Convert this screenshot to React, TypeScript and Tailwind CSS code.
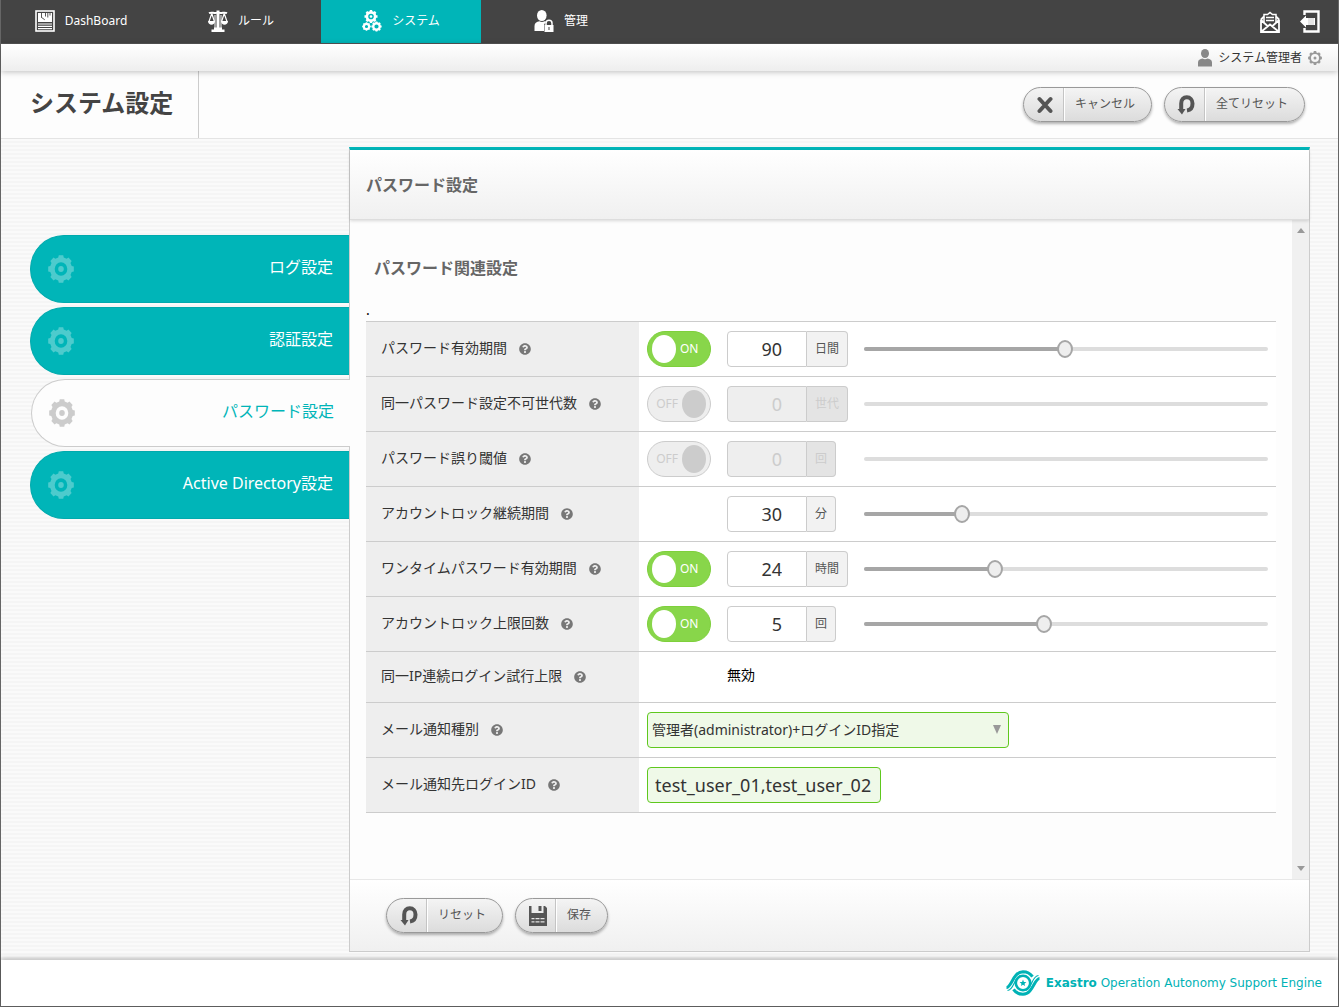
import { useState } from 'react'
import type { ReactNode } from 'react'
import { FaQuestionCircle } from 'react-icons/fa'

/** Outline of a cog with square teeth centred on (cx, cy). */
function cogPath(cx: number, cy: number, outer: number, root: number, teeth = 8) {
  const points: string[] = []
  const step = (Math.PI * 2) / teeth
  for (let i = 0; i < teeth; i++) {
    const a = i * step - Math.PI / 2
    const corners: [number, number][] = [
      [root, a - step * 0.32],
      [outer, a - step * 0.22],
      [outer, a + step * 0.22],
      [root, a + step * 0.32],
    ]
    corners.forEach(([r, t]) => points.push(`${(cx + r * Math.cos(t)).toFixed(2)} ${(cy + r * Math.sin(t)).toFixed(2)}`))
  }
  return `M${points.join('L')}Z`
}

function ring(cx: number, cy: number, r: number) {
  return `M${cx - r} ${cy}a${r} ${r} 0 1 0 ${r * 2} 0a${r} ${r} 0 1 0 ${-r * 2} 0Z`
}

function GearIcon({ className }: { className: string }) {
  return (
    <svg viewBox="0 0 28 28" preserveAspectRatio="none" className={className} fill="currentColor" fillRule="evenodd" aria-hidden="true">
      <path d={cogPath(14, 14, 14, 11.9) + ring(14, 14, 6.8)} />
      <circle cx="14" cy="14" r="3" />
    </svg>
  )
}

function ThinGearIcon() {
  return (
    <svg viewBox="0 0 28 28" className="h-3.5 w-3.5 text-[#999]" fill="currentColor" fillRule="evenodd" aria-hidden="true">
      <path d={cogPath(14, 14, 14, 11.6) + ring(14, 14, 8)} />
      <circle cx="14" cy="14" r="3" />
    </svg>
  )
}

function DashboardIcon() {
  return (
    <svg viewBox="0 0 20 22" className="h-[22px] w-5" aria-hidden="true">
      <rect x="1" y="1" width="18" height="20" fill="none" stroke="#fff" strokeWidth="1.6" />
      <rect x="3" y="3" width="14" height="9" fill="#fff" />
      <path d="M6.500 3v4.500M6.200 7.200l3.600 2.600M10.500 3v3.500M12.800 3v4.500M15 3v2.500" stroke="#444" strokeWidth="0.900" fill="none" />
      <path d="M3 14h14M3 16.300h14M3 18.600h14" stroke="#fff" strokeWidth="1.200" />
    </svg>
  )
}

function ScaleIcon() {
  return (
    <svg viewBox="0 0 20 22" className="h-[22px] w-5" fill="none" stroke="#fff" aria-hidden="true">
      <path d="M1 3.200c3-1.600 5 .8 9-.6 4 1.400 6-1 9 .6" strokeWidth="2" />
      <path d="M10 0.500v19" strokeWidth="3" />
      <path d="M7 5v13M13 5v13" strokeWidth="1" />
      <path d="M3.800 3.500 1 11.500M3.800 3.500l2.600 8M16.200 3.500l-2.600 8M16.200 3.500l2.800 8" strokeWidth="1.200" />
      <path d="M0 11h7c0 5-7 5-7 0ZM13 11h7c0 5-7 5-7 0Z" fill="#fff" stroke="none" />
      <path d="M3.500 19.500h13V22h-13ZM6 17.500h8v2H6Z" fill="#fff" stroke="none" />
    </svg>
  )
}

function GearsIcon() {
  return (
    <svg viewBox="0 0 20 22" className="h-[22px] w-5" fill="#fff" fillRule="evenodd" aria-hidden="true">
      <path d={cogPath(9, 6.5, 6.6, 5.4) + ring(9, 6.5, 2.8)} />
      <circle cx="9" cy="6.500" r="1.300" />
      <path d={cogPath(4.5, 16.5, 4.4, 3.7) + ring(4.5, 16.5, 1.6)} />
      <path d={cogPath(14.5, 16.5, 5.2, 4.4) + ring(14.5, 16.5, 2.1)} />
    </svg>
  )
}

function UserLockIcon() {
  return (
    <svg viewBox="0 0 20 22" className="h-[22px] w-5" fill="#fff" aria-hidden="true">
      <ellipse cx="7.800" cy="5.500" rx="4.800" ry="5.500" />
      <path d="M0.500 21v-5c0-3 2-4.200 5-4.700 1.500 1 3.500 1 5 0 1 .2 1.600.400 2 .8-1.600 1-2.300 2-2.500 3.600v5.300Z" />
      <path d="M12 15.500v-2.200a3 3 0 0 1 6 0v2.200" fill="none" stroke="#fff" strokeWidth="1.500" />
      <path fillRule="evenodd" d="M10.500 15h9v7h-9ZM14.500 17v3h1v-3Z" />
    </svg>
  )
}

function MailIcon() {
  return (
    <svg viewBox="0 0 20 22" className="h-[22px] w-5" fill="none" stroke="#fff" strokeWidth="1.800" aria-hidden="true">
      <path d="M1 8.500v12.500h18V8.500M1 8.500 4 5.500M19 8.500l-3-3M1 9l6.500 6M19 9l-6.500 6M1.500 20.500l8.500-7 8.500 7" />
      <path d="M4 11V3.500h3.500L10 1.500l2.500 2H16V11M6 6.500h8M6 9.500h8" strokeWidth="1.500" />
    </svg>
  )
}

function LogoutIcon() {
  return (
    <svg viewBox="0 0 20 23" className="h-[23px] w-5" aria-hidden="true">
      <path d="M4.500 5V1.500h14v20h-14V18" fill="none" stroke="#fff" strokeWidth="2.400" />
      <path d="M0 11.500 6 5.500v2.500h9v7H6v2.500Z" fill="#fff" />
      <path d="M9 8v7M11 8v7M13 8v7" stroke="#aaa" strokeWidth="0.600" />
    </svg>
  )
}

function PersonIcon() {
  return (
    <svg viewBox="0 0 14 18" className="h-[18px] w-3.5" fill="#888" aria-hidden="true">
      <ellipse cx="7" cy="4.500" rx="4" ry="4.500" />
      <path d="M0 17.500v-4C0 11 2 10.200 4.500 9.600c1.500 1 3.500 1 5 0C12 10.200 14 11 14 13.500v4Z" />
    </svg>
  )
}

function CrossIcon() {
  return (
    <svg viewBox="0 0 16 18" className="h-[18px] w-4" stroke="#555" strokeWidth="4" strokeLinecap="round" aria-hidden="true">
      <path d="m2.500 3 11 12M13.500 3l-11 12" />
    </svg>
  )
}

function ResetIcon() {
  return (
    <svg viewBox="0 0 18 20" className="h-5 w-[18px]" fill="none" aria-hidden="true">
      <path d="M4.200 15V8.500C4.200 4.500 6.500 2.300 9.800 2.300S15.500 5 15.500 8.500 13.800 15 10 15.500" stroke="#555" strokeWidth="4" />
      <path d="M0.500 14h8l-3.500 5.500Z" fill="#555" />
    </svg>
  )
}

function SaveIcon() {
  return (
    <svg viewBox="0 0 18 20" className="h-5 w-[18px]" aria-hidden="true">
      <path fill="#555" fillRule="evenodd" d="M0 0h2.500v7h12V0H16l2 2v18H0ZM2.500 12v1.300h13V12ZM2.500 15.300v1.300h13v-1.300Z" />
      <path fill="#555" d="M9.500 0h3v5h-3Z" />
      <path d="M6 12v6M11 12v6" stroke="#555" />
    </svg>
  )
}

function BrandLogo() {
  return (
    <svg viewBox="0 0 34 26" className="h-[26px] w-[34px]" fill="none" stroke="#00b2b5" aria-hidden="true">
      <path d="M0.500 17.500C5.500 17.500 7 2 17 1.700c4.500 0 7.500 2 9.500 5" strokeWidth="3" />
      <path d="M33.500 8.500C28.500 8.500 27 24 17 24.300c-4.500 0-7.500-2-9.500-5" strokeWidth="3" />
      <path d="M1.500 20.500C8 20.500 8 7.500 14.500 5.500M32.500 5.500C26 5.500 26 18.500 19.500 20.500" strokeWidth="1.200" />
      <circle cx="17" cy="13" r="7.200" strokeWidth="2.600" />
      <path d="m17 9.600 .9 2.300 2.500.2-1.900 1.600.6 2.400-2.100-1.300-2.100 1.300.6-2.400-1.900-1.600 2.500-.2Z" fill="#00b2b5" stroke="none" />
    </svg>
  )
}

function PillButton({ icon, children }: { icon: ReactNode; children: ReactNode }) {
  return (
    <button
      type="button"
      className="flex h-[35px] items-stretch rounded-full border border-[#999] bg-linear-to-b from-[#f4f4f4] to-[#dcdcdc] text-xs text-[#555] shadow-[0_2px_3px_rgba(0,0,0,0.3)]"
    >
      <span className="flex w-10 items-center justify-center border-r border-[#c4c4c4] pl-1">{icon}</span>
      <span className="flex items-center border-l border-white pr-4 pb-0.5 pl-2.5">{children}</span>
    </button>
  )
}

const navItems = [
  { label: 'DashBoard', icon: <DashboardIcon /> },
  { label: 'ルール', icon: <ScaleIcon /> },
  { label: 'システム', icon: <GearsIcon />, active: true },
  { label: '管理', icon: <UserLockIcon /> },
]

const tabs = ['ログ設定', '認証設定', 'パスワード設定', 'Active Directory設定']

type NumberSetting = {
  id: string
  label: string
  value: number
  max: number
  unit: string
  toggle: boolean
  enabled: boolean
}

const settings: NumberSetting[] = [
  { id: 'pass-valid', label: 'パスワード有効期間', value: 90, max: 180, unit: '日間', toggle: true, enabled: true },
  { id: 'pass-generation', label: '同一パスワード設定不可世代数', value: 0, max: 10, unit: '世代', toggle: true, enabled: false },
  { id: 'pass-threshold', label: 'パスワード誤り閾値', value: 0, max: 10, unit: '回', toggle: true, enabled: false },
  { id: 'lock-period', label: 'アカウントロック継続期間', value: 30, max: 120, unit: '分', toggle: false, enabled: true },
  { id: 'onetime-valid', label: 'ワンタイムパスワード有効期間', value: 24, max: 72, unit: '時間', toggle: true, enabled: true },
  { id: 'lock-limit', label: 'アカウントロック上限回数', value: 5, max: 10, unit: '回', toggle: true, enabled: true },
]

function RowLabel({ children, htmlFor }: { children: ReactNode; htmlFor?: string }) {
  return (
    <th scope="row" className="bg-[#eee] pb-0.5 pl-[15px] text-left font-normal text-[#333]">
      <span className="flex items-center">
        <label htmlFor={htmlFor}>{children}</label>
        <button type="button" aria-label="ヘルプ" className="mt-0.5 ml-3 text-[#777]">
          <FaQuestionCircle className="h-3 w-3" />
        </button>
      </span>
    </th>
  )
}

function Switch({ on, label, onChange }: { on: boolean; label: string; onChange: (v: boolean) => void }) {
  return (
    <label
      className={
        on
          ? 'flex h-9 w-16 items-center rounded-full border border-[#7ed03c] bg-[#88d64a] pl-1 text-xs text-white'
          : 'flex h-9 w-16 items-center justify-end rounded-full border border-[#ccc] bg-[#eee] pr-1 text-xs text-[#ccc]'
      }
    >
      <input type="checkbox" className="sr-only" checked={on} aria-label={label} onChange={(e) => onChange(e.target.checked)} />
      {on ? (
        <>
          <span className="h-7 w-6 rounded-[50%] bg-white" />
          <span className="ml-1">ON</span>
        </>
      ) : (
        <>
          <span className="mr-1">OFF</span>
          <span className="h-7 w-6 rounded-[50%] bg-[#ccc]" />
        </>
      )}
    </label>
  )
}

function SettingRow({ setting }: { setting: NumberSetting }) {
  const [value, setValue] = useState(setting.value)
  const [on, setOn] = useState(setting.enabled)
  const percent = ((value - 1) / (setting.max - 1)) * 100
  return (
    <tr className="h-[55px] border-y border-[#ccc]">
      <RowLabel htmlFor={setting.id}>{setting.label}</RowLabel>
      <td className="bg-white px-2">
        <div className="flex items-center gap-4">
          <div className="w-16 shrink-0">{setting.toggle && <Switch on={on} label={setting.label} onChange={setOn} />}</div>
          <div className="flex w-[121px] shrink-0">
            <input
              id={setting.id}
              type="text"
              inputMode="numeric"
              value={value}
              disabled={!on}
              onChange={(e) => setValue(Number(e.target.value) || 0)}
              className="h-9 w-20 rounded-l border border-[#ccc] bg-white pr-6 text-right text-lg text-[#333] disabled:bg-[#eee] disabled:text-[#ccc]"
            />
            <span
              className={
                on
                  ? 'flex h-9 items-center rounded-r border border-l-0 border-[#ccc] bg-[#f2f2f2] px-2 text-xs text-[#555]'
                  : 'flex h-9 items-center rounded-r border border-l-0 border-[#ccc] bg-[#e4e4e4] px-2 text-xs text-[#ccc]'
              }
            >
              {setting.unit}
            </span>
          </div>
          <div className="grid flex-1 items-center">
            <div className="col-start-1 row-start-1 h-1 overflow-hidden rounded-full bg-[#ddd]">
              {on && <div className="h-full bg-[#a6a6a6]" style={{ width: `${percent}%` }} />}
            </div>
            {on && (
              <input
                type="range"
                aria-label={setting.label}
                min={1}
                max={setting.max}
                value={value}
                onChange={(e) => setValue(Number(e.target.value))}
                className="col-start-1 row-start-1 -mx-2 h-[18px] appearance-none bg-transparent [&::-webkit-slider-thumb]:h-[18px] [&::-webkit-slider-thumb]:w-4 [&::-webkit-slider-thumb]:appearance-none [&::-webkit-slider-thumb]:rounded-[50%] [&::-webkit-slider-thumb]:border-2 [&::-webkit-slider-thumb]:border-[#a6a6a6] [&::-webkit-slider-thumb]:bg-[#eee]"
              />
            )}
          </div>
        </div>
      </td>
    </tr>
  )
}

const stripes =
  'bg-[repeating-linear-gradient(to_bottom,#fafafa_0,#fafafa_2px,#f5f5f5_2px,#f5f5f5_4px)]'

export default function App() {
  return (
    <div className="flex min-h-screen flex-col border-x border-b border-[#666] bg-white font-['Noto_Sans','Noto_Sans_CJK_JP',sans-serif] text-sm text-[#333]">
      <header>
        <div className="flex h-11 items-stretch justify-between border-b border-[#555] bg-[#444] text-xs text-white">
          <nav className="flex">
            {navItems.map((item) => (
              <a
                key={item.label}
                href="#"
                className={
                  item.active
                    ? 'flex w-40 items-center justify-center gap-2.5 bg-[#00b5b8] pb-0.5'
                    : 'flex w-40 items-center justify-center gap-2.5 pb-0.5'
                }
              >
                {item.icon}
                <span>{item.label}</span>
              </a>
            ))}
          </nav>
          <div className="flex items-center gap-5 pr-[18px]">
            <button type="button" aria-label="メール">
              <MailIcon />
            </button>
            <button type="button" aria-label="ログアウト">
              <LogoutIcon />
            </button>
          </div>
        </div>
        <div className="relative flex h-[27px] items-center justify-end gap-1.5 bg-linear-to-b from-white to-[#eee] pr-4 text-xs shadow-[0_1px_6px_rgba(0,0,0,0.25)]">
          <PersonIcon />
          <span>システム管理者</span>
          <button type="button" aria-label="ユーザー設定">
            <ThinGearIcon />
          </button>
        </div>
        <div className="flex h-[68px] items-stretch justify-between border-b border-[#e4e4e4] bg-[#fdfdfd] pr-[33px]">
          <h1 className="flex items-center border-r border-[#ccc] pr-[25px] pb-1 pl-[29px] text-2xl font-bold text-[#444]">システム設定</h1>
          <div className="flex items-center gap-3">
            <PillButton icon={<CrossIcon />}>キャンセル</PillButton>
            <PillButton icon={<ResetIcon />}>全てリセット</PillButton>
          </div>
        </div>
      </header>

      <main className={`flex flex-1 pt-2 pr-7 pb-2 pl-[29px] ${stripes}`}>
        <nav className="flex w-[319px] shrink-0 flex-col gap-1 pt-[88px] text-base">
          {tabs.map((tab) =>
            tab === 'パスワード設定' ? (
              <a
                key={tab}
                href="#"
                aria-current="page"
                className="relative z-10 -mr-px ml-px flex h-[68px] items-center justify-between rounded-l-[34px] border border-r-0 border-[#ccc] bg-[#fdfdfd] pr-4 pl-[17px] text-[#00b5b8]"
              >
                <GearIcon className="h-7 w-[26px] text-[#ccc]" />
                <span className="pb-1">{tab}</span>
              </a>
            ) : (
              <a
                key={tab}
                href="#"
                className="flex h-[68px] items-center justify-between rounded-l-[34px] border border-r-0 border-[#00aaad] bg-[#00b5b8] pr-4 pl-[17px] text-white"
              >
                <GearIcon className="h-7 w-[26px] text-[#4dcbcd]" />
                <span className="pb-1">{tab}</span>
              </a>
            ),
          )}
        </nav>

        <section className="flex min-w-0 flex-1 flex-col border border-t-3 border-[#ccc] border-t-[#00b5b8] bg-[#fdfdfd]">
          <div className="relative flex h-[70px] items-center border-b border-[#ddd] bg-linear-to-b from-white to-[#f0f0f0] pl-4 shadow-[0_1px_3px_rgba(0,0,0,0.15)]">
            <h2 className="text-base font-bold text-[#666]">パスワード設定</h2>
          </div>

          <div className="flex flex-1">
            <div className="flex-1 px-4 pt-9">
              <h3 className="pl-2 text-base font-bold text-[#666]">パスワード関連設定</h3>
              <p className="mt-5 h-[21px] text-black">.</p>
              <table className="w-full border-collapse">
                <colgroup>
                  <col className="w-[273px]" />
                  <col />
                </colgroup>
                <tbody>
                  {settings.map((s) => (
                    <SettingRow key={s.id} setting={s} />
                  ))}
                  <tr className="h-[51px] border-y border-[#ccc]">
                    <RowLabel>同一IP連続ログイン試行上限</RowLabel>
                    <td className="bg-white pb-1 pl-[88px] text-black">無効</td>
                  </tr>
                  <tr className="h-[55px] border-y border-[#ccc]">
                    <RowLabel htmlFor="mail-type">メール通知種別</RowLabel>
                    <td className="bg-white px-2">
                      <div className="relative w-[362px]">
                        <select
                          id="mail-type"
                          className="block h-9 w-full appearance-none rounded border border-[#5fc81e] bg-[#eff9e8] px-1 text-sm text-[#333]"
                        >
                          <option>管理者(administrator)+ログインID指定</option>
                        </select>
                        <svg viewBox="0 0 8 9" className="pointer-events-none absolute top-[13px] right-2 h-[9px] w-2" fill="#999" aria-hidden="true">
                          <path d="M0 0h8L4 9Z" />
                        </svg>
                      </div>
                    </td>
                  </tr>
                  <tr className="h-[55px] border-y border-[#ccc]">
                    <RowLabel htmlFor="mail-login">メール通知先ログインID</RowLabel>
                    <td className="bg-white px-2">
                      <input
                        id="mail-login"
                        type="text"
                        defaultValue="test_user_01,test_user_02"
                        className="block h-9 w-[234px] rounded border border-[#5fc81e] bg-[#eff9e8] px-[7px] text-lg text-[#333]"
                      />
                    </td>
                  </tr>
                </tbody>
              </table>
            </div>
            <div className="flex w-[17px] shrink-0 flex-col justify-between bg-[#f0f0f0] py-2">
              <button type="button" aria-label="上へスクロール" className="flex justify-center">
                <svg viewBox="0 0 8 5" className="h-[5px] w-2" fill="#999" aria-hidden="true">
                  <path d="M0 5h8L4 0Z" />
                </svg>
              </button>
              <button type="button" aria-label="下へスクロール" className="flex justify-center">
                <svg viewBox="0 0 8 5" className="h-[5px] w-2" fill="#999" aria-hidden="true">
                  <path d="M0 0h8L4 5Z" />
                </svg>
              </button>
            </div>
          </div>

          <div className="flex h-[72px] items-center gap-3 border-t border-[#e8e8e8] bg-linear-to-b from-white to-[#f0f0f0] pl-9">
            <PillButton icon={<ResetIcon />}>リセット</PillButton>
            <PillButton icon={<SaveIcon />}>保存</PillButton>
          </div>
        </section>
      </main>

      <footer className="relative flex h-[46px] items-center justify-end gap-1.5 bg-white pr-4 font-['DejaVu_Sans',sans-serif] text-xs text-[#00b2b5] shadow-[0_-1px_5px_rgba(0,0,0,0.3)]">
        <BrandLogo />
        <p>
          <strong className="font-bold">Exastro</strong> Operation Autonomy Support Engine
        </p>
      </footer>
    </div>
  )
}
